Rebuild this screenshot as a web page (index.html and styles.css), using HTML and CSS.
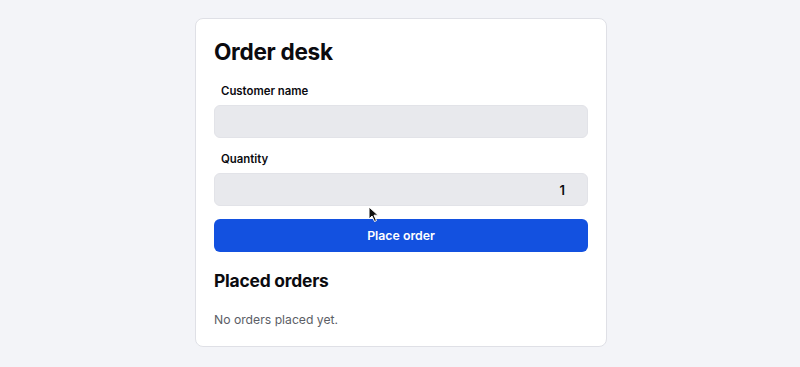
FILE: index.html
```html
<!DOCTYPE html>
<html lang="en">

<head>
    <meta charset="utf-8">
    <title>Order desk</title>
    <link rel="stylesheet" href="styles.css">
</head>

<body>
    <div class="card">
        <h1 class="title">Order desk</h1>
        <form class="order-form" id="orderForm">
            <label class="label" for="customer">Customer name</label>
            <input class="field" id="customer" type="text">
            <label class="label" for="qty">Quantity</label>
            <input class="field field-num" id="qty" type="number" value="1" min="1">
            <button class="btn" type="submit">Place order</button>
        </form>
        <h2 class="subtitle">Placed orders</h2>
        <p class="empty" id="orders">No orders placed yet.</p>
        <!-- mouse pointer from the screenshot -->
        <svg class="pointer" width="12" height="17" viewBox="0 0 12 17">
            <path d="M1 1 L1 13 L4 10 L6.5 15.5 L8.5 14.6 L6 9.2 L10 9.2 Z" fill="#111" stroke="#fff" stroke-width="1"/>
        </svg>
    </div>
</body>

</html>
```

FILE: styles.css
```css
* {
    box-sizing: border-box;
}

body {
    margin: 0;
    background: #f3f4f8;
    font-family: Inter, "Noto Sans", sans-serif;
    color: #0b0b0f;
}

.card {
    position: relative;
    width: 412px;
    margin: 18px 0 0 195px;
    padding: 18px;
    background: #fff;
    border: 1px solid #dfe0e6;
    border-radius: 8px;
}

.title {
    margin: 0 0 16px;
    font-size: 22.6px;
    line-height: 30px;
    font-weight: 700;
    letter-spacing: -0.3px;
}

.order-form {
    display: flex;
    flex-direction: column;
}

.label {
    padding-left: 7px;
    margin-bottom: 6px;
    font-size: 11.4px;
    line-height: 16px;
    font-weight: 600;
}

.field {
    height: 33px;
    margin-bottom: 13px;
    padding: 0 22px 0 10px;
    border: 1px solid #e2e3e8;
    border-radius: 6px;
    background: #e8e9ed;
    font-family: inherit;
    font-size: 13px;
    font-weight: 600;
    color: #0b0b0f;
}

.field-num {
    text-align: right;
    -moz-appearance: textfield;
}

.field-num::-webkit-inner-spin-button,
.field-num::-webkit-outer-spin-button {
    -webkit-appearance: none;
    margin: 0;
}

.btn {
    height: 33px;
    border: none;
    border-radius: 6px;
    background: #1351e0;
    color: #fff;
    font-family: inherit;
    font-size: 12.3px;
    font-weight: 600;
    cursor: pointer;
}

.subtitle {
    margin: 17px 0 18px;
    font-size: 17.4px;
    line-height: 24px;
    font-weight: 700;
    letter-spacing: -0.2px;
}

.empty {
    margin: 0;
    font-size: 12.2px;
    line-height: 17px;
    color: #5b5e66;
}

.pointer {
    position: absolute;
    left: 172px;
    top: 187px;
}
```
